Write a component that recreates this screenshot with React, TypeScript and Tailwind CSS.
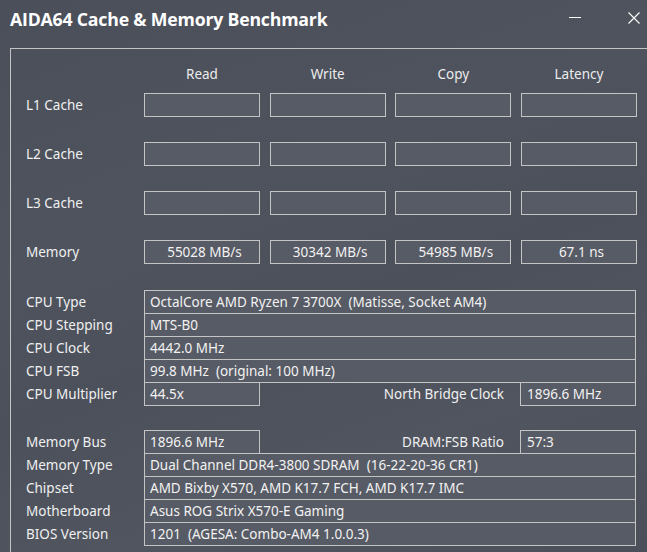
import React from "react";

const FONT = "font-['Noto_Sans','Open_Sans',sans-serif]";

const columns = ["Read", "Write", "Copy", "Latency"];

const benchRows: { label: string; values: string[] }[] = [
  { label: "L1 Cache", values: ["", "", "", ""] },
  { label: "L2 Cache", values: ["", "", "", ""] },
  { label: "L3 Cache", values: ["", "", "", ""] },
  { label: "Memory", values: ["55028 MB/s", "30342 MB/s", "54985 MB/s", "67.1 ns"] },
];

/* one bordered value box; boxes overlap by 1px so rows share a line */
function Box({ children, className = "" }: { children?: React.ReactNode; className?: string }) {
  return (
    <div
      className={`flex h-[24px] items-center border border-[#c4c4c4] bg-[#575b65] pl-[5px] whitespace-pre text-[#f2f2f2] ${className}`}
    >
      {children}
    </div>
  );
}

function Label({ children }: { children: React.ReactNode }) {
  return <div className="w-[118px] shrink-0 text-[#f0f0f0]">{children}</div>;
}

function InfoRow({ label, value, first = false }: { label: string; value: string; first?: boolean }) {
  return (
    <div className={`flex items-center ${first ? "" : "-mt-px"}`}>
      <Label>{label}</Label>
      <Box className="w-[492px]">{value}</Box>
    </div>
  );
}

function SplitRow({
  label,
  value,
  rightLabel,
  rightValue,
  first = false,
}: {
  label: string;
  value: string;
  rightLabel: string;
  rightValue: string;
  first?: boolean;
}) {
  return (
    <div className={`flex w-[610px] items-center ${first ? "" : "-mt-px"}`}>
      <Label>{label}</Label>
      <Box className="w-[116px]">{value}</Box>
      <div className="flex-1 pr-[16px] text-right text-[#f0f0f0]">{rightLabel}</div>
      <Box className="w-[116px] pl-[6px]">{rightValue}</Box>
    </div>
  );
}

export default function App() {
  return (
    <div
      className={`flex h-[552px] w-[647px] flex-col overflow-hidden bg-[#4b505b] bg-[linear-gradient(160deg,#4a4f5a_0%,#4e535e_35%,#4b505b_55%,#50555f_75%,#4a4f5a_100%)] text-[13.5px] ${FONT}`}
    >
      {/* title bar */}
      <div className="flex h-[48px] shrink-0 items-start">
        <div className="pl-[10px] pt-[6px] font-['Open_Sans',sans-serif] text-[17.7px] font-bold tracking-[-0.2px] text-white">
          AIDA64 Cache &amp; Memory Benchmark
        </div>
        <div className="ml-auto flex items-start">
          <div className="mr-[47px] mt-[17px] h-px w-[12px] bg-white" />
          <svg className="mr-[7px] mt-[12px]" width="12" height="12" viewBox="0 0 12 12">
            <path d="M0.5 0.5 L11.5 11.5 M11.5 0.5 L0.5 11.5" stroke="#ffffff" strokeWidth="1.1" />
          </svg>
        </div>
      </div>

      {/* group box */}
      <div className="ml-[10px] flex-1 border-l border-t border-[#c4c4c4] pl-[15px]">
        <div className="grid grid-cols-[108.33px_116px_116px_116px_116px] gap-x-[9.67px] pt-[15px]">
          <div />
          {columns.map((c) => (
            <div key={c} className="h-[21px] text-center text-[#ececec]">
              {c}
            </div>
          ))}
        </div>

        <div className="mt-[8px] flex flex-col gap-y-[25px]">
          {benchRows.map((r) => (
            <div
              key={r.label}
              className="grid grid-cols-[108.33px_116px_116px_116px_116px] items-center gap-x-[9.67px]"
            >
              <div className="text-[#f0f0f0]">{r.label}</div>
              {r.values.map((v, i) => (
                <Box key={i} className="justify-center pl-0">
                  {v}
                </Box>
              ))}
            </div>
          ))}
        </div>

        <div className="mt-[26px] flex flex-col">
          <InfoRow first label="CPU Type" value="OctalCore AMD Ryzen 7 3700X  (Matisse, Socket AM4)" />
          <InfoRow label="CPU Stepping" value="MTS-B0" />
          <InfoRow label="CPU Clock" value="4442.0 MHz" />
          <InfoRow label="CPU FSB" value="99.8 MHz  (original: 100 MHz)" />
          <SplitRow label="CPU Multiplier" value="44.5x" rightLabel="North Bridge Clock" rightValue="1896.6 MHz" />
        </div>

        <div className="mt-[24px] flex flex-col">
          <SplitRow first label="Memory Bus" value="1896.6 MHz" rightLabel="DRAM:FSB Ratio" rightValue="57:3" />
          <InfoRow label="Memory Type" value="Dual Channel DDR4-3800 SDRAM  (16-22-20-36 CR1)" />
          <InfoRow label="Chipset" value="AMD Bixby X570, AMD K17.7 FCH, AMD K17.7 IMC" />
          <InfoRow label="Motherboard" value="Asus ROG Strix X570-E Gaming" />
          <InfoRow label="BIOS Version" value="1201  (AGESA: Combo-AM4 1.0.0.3)" />
        </div>
      </div>
    </div>
  );
}
